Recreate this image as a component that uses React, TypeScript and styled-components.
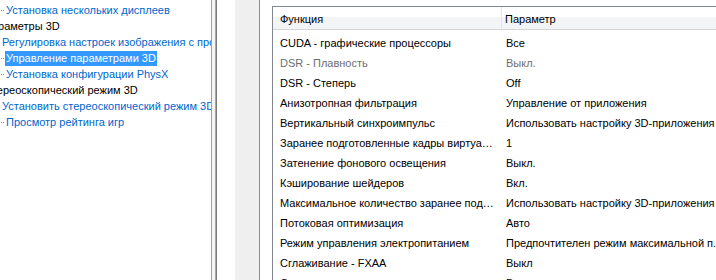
import React from "react";
import styled, { createGlobalStyle } from "styled-components";

interface TreeItem {
    label: string;
    kind: 'category' | 'link';
    selected?: boolean;
}

interface SettingRow {
    name: string;
    value: string;
    disabled?: boolean;
}

const treeItems: TreeItem[] = [
    { label: 'Установка нескольких дисплеев', kind: 'link' },
    { label: 'Параметры 3D', kind: 'category' },
    { label: 'Регулировка настроек изображения с просмотром', kind: 'link' },
    { label: 'Управление параметрами 3D', kind: 'link', selected: true },
    { label: 'Установка конфигурации PhysX', kind: 'link' },
    { label: 'Стереоскопический режим 3D', kind: 'category' },
    { label: 'Установить стереоскопический режим 3D', kind: 'link' },
    { label: 'Просмотр рейтинга игр', kind: 'link' },
];

const settings: SettingRow[] = [
    { name: 'CUDA - графические процессоры', value: 'Все' },
    { name: 'DSR - Плавность', value: 'Выкл.', disabled: true },
    { name: 'DSR - Степерь', value: 'Off' },
    { name: 'Анизотропная фильтрация', value: 'Управление от приложения' },
    { name: 'Вертикальный синхроимпульс', value: 'Использовать настройку 3D-приложения' },
    { name: 'Заранее подготовленные кадры виртуальной реальности', value: '1' },
    { name: 'Затенение фонового освещения', value: 'Выкл.' },
    { name: 'Кэширование шейдеров', value: 'Вкл.' },
    { name: 'Максимальное количество заранее подготовленных кадров', value: 'Использовать настройку 3D-приложения' },
    { name: 'Потоковая оптимизация', value: 'Авто' },
    { name: 'Режим управления электропитанием', value: 'Предпочтителен режим максимальной п.' },
    { name: 'Сглаживание - FXAA', value: 'Выкл' },
    { name: 'Сглаживание - гамма-коррекция', value: 'Вкл' },
];

const App: React.FC = () => {
    return (
        <>
            <GlobalStyle />
            <Window>
                <TreePane>
                    <TreeList>
                        {treeItems.map((item, index) => (
                            <TreeRow key={index} $kind={item.kind}>
                                {item.kind === 'link' && <TreeDots />}
                                <TreeLabel $kind={item.kind} $selected={!!item.selected}>
                                    {item.label}
                                </TreeLabel>
                            </TreeRow>
                        ))}
                    </TreeList>
                </TreePane>
                <Splitter />
                <RightArea>
                    <GutterStrip />
                    <ContentPanel>
                        <SettingsTable>
                            <HeaderRow>
                                <HeaderCell $first>Функция</HeaderCell>
                                <HeaderCell>Параметр</HeaderCell>
                            </HeaderRow>
                            <TableBody>
                                {settings.map((row, index) => (
                                    <DataRow key={index} $disabled={!!row.disabled}>
                                        <NameCell>{row.name}</NameCell>
                                        <ValueCell>{row.value}</ValueCell>
                                    </DataRow>
                                ))}
                            </TableBody>
                        </SettingsTable>
                    </ContentPanel>
                </RightArea>
            </Window>
        </>
    );
};

const GlobalStyle = createGlobalStyle`
    html, body {
        margin: 0;
        padding: 0;
        background: #ffffff;
        overflow: hidden;
    }

    body {
        font-family: "Liberation Sans", Arial, sans-serif;
        font-size: 11px;
        color: #000000;
    }
`;

const Window = styled.div`
    display: flex;
    flex-direction: row;
    width: 716px;
    height: 280px;
    overflow: hidden;
    background: #ffffff;
`;

const TreePane = styled.div`
    width: 211px;
    flex-shrink: 0;
    overflow: hidden;
    background: #ffffff;
`;

// the tree is scrolled a little to the right, so category names are cut
const TreeList = styled.div`
    display: flex;
    flex-direction: column;
    margin-left: -17px;
    padding-top: 2px;
`;

interface TreeKindProps {
    $kind: 'category' | 'link';
}

const TreeRow = styled.div<TreeKindProps>`
    display: flex;
    flex-direction: row;
    align-items: center;
    height: 16px;
    white-space: nowrap;
    padding-left: ${({ $kind }) => ($kind === 'link' ? '18px' : '0')};
`;

const TreeDots = styled.span`
    display: inline-block;
    width: 4px;
    height: 1px;
    background-image: repeating-linear-gradient(90deg, #8c8c8c 0 1px, transparent 1px 2px);
`;

interface TreeLabelProps extends TreeKindProps {
    $selected: boolean;
}

const TreeLabel = styled.span<TreeLabelProps>`
    display: inline-block;
    line-height: 15px;
    padding: 0 1px;
    color: ${({ $kind, $selected }) => ($selected ? '#ffffff' : $kind === 'link' ? '#0066cc' : '#000000')};
    background: ${({ $selected }) => ($selected ? '#3399ff' : 'transparent')};
`;

const Splitter = styled.div`
    width: 4px;
    flex-shrink: 0;
    background: #f4f4f4;
    border-left: 1px solid #a0a0a0;
    border-right: 1px solid #7a7a7a;
    box-shadow: inset -1px 0 0 #a8a8a8;
`;

const RightArea = styled.div`
    flex: 1;
    display: flex;
    flex-direction: row;
    padding-left: 18px;
    background: #ffffff;
    min-width: 0;
`;

const GutterStrip = styled.div`
    width: 24px;
    flex-shrink: 0;
    background: #efefef;
    border-right: 1px solid #8a8a8a;
`;

const ContentPanel = styled.div`
    flex: 1;
    min-width: 0;
    padding: 6px 0 0 12px;
    background: #ffffff;
    overflow: hidden;
`;

const SettingsTable = styled.div`
    display: flex;
    flex-direction: column;
    width: 520px;
    border-top: 1px solid #828790;
    border-left: 1px solid #828790;
`;

const HeaderRow = styled.div`
    display: grid;
    grid-template-columns: 229px 1fr;
    height: 22px;
    border-bottom: 1px solid #d5d5d5;
    background: linear-gradient(to bottom, #ffffff 0, #ffffff 45%, #f3f4f6 45%, #f3f4f6 100%);
`;

interface HeaderCellProps {
    $first?: boolean;
}

const HeaderCell = styled.div<HeaderCellProps>`
    display: flex;
    align-items: center;
    padding-left: ${({ $first }) => ($first ? '7px' : '3px')};
    padding-top: 2px;
    border-right: ${({ $first }) => ($first ? '1px solid #e3e5e8' : 'none')};
    white-space: nowrap;
    overflow: hidden;
`;

const TableBody = styled.div`
    display: flex;
    flex-direction: column;
    padding-top: 3px;
`;

interface DataRowProps {
    $disabled: boolean;
}

const DataRow = styled.div<DataRowProps>`
    display: grid;
    grid-template-columns: 230px 1fr;
    height: 20px;
    align-items: center;
    color: ${({ $disabled }) => ($disabled ? '#6d6d6d' : '#000000')};
`;

const NameCell = styled.div`
    padding: 0 6px 0 7px;
    white-space: nowrap;
    overflow: hidden;
    text-overflow: ellipsis;
`;

const ValueCell = styled.div`
    padding-left: 3px;
    white-space: nowrap;
    overflow: hidden;
`;

export default App;
